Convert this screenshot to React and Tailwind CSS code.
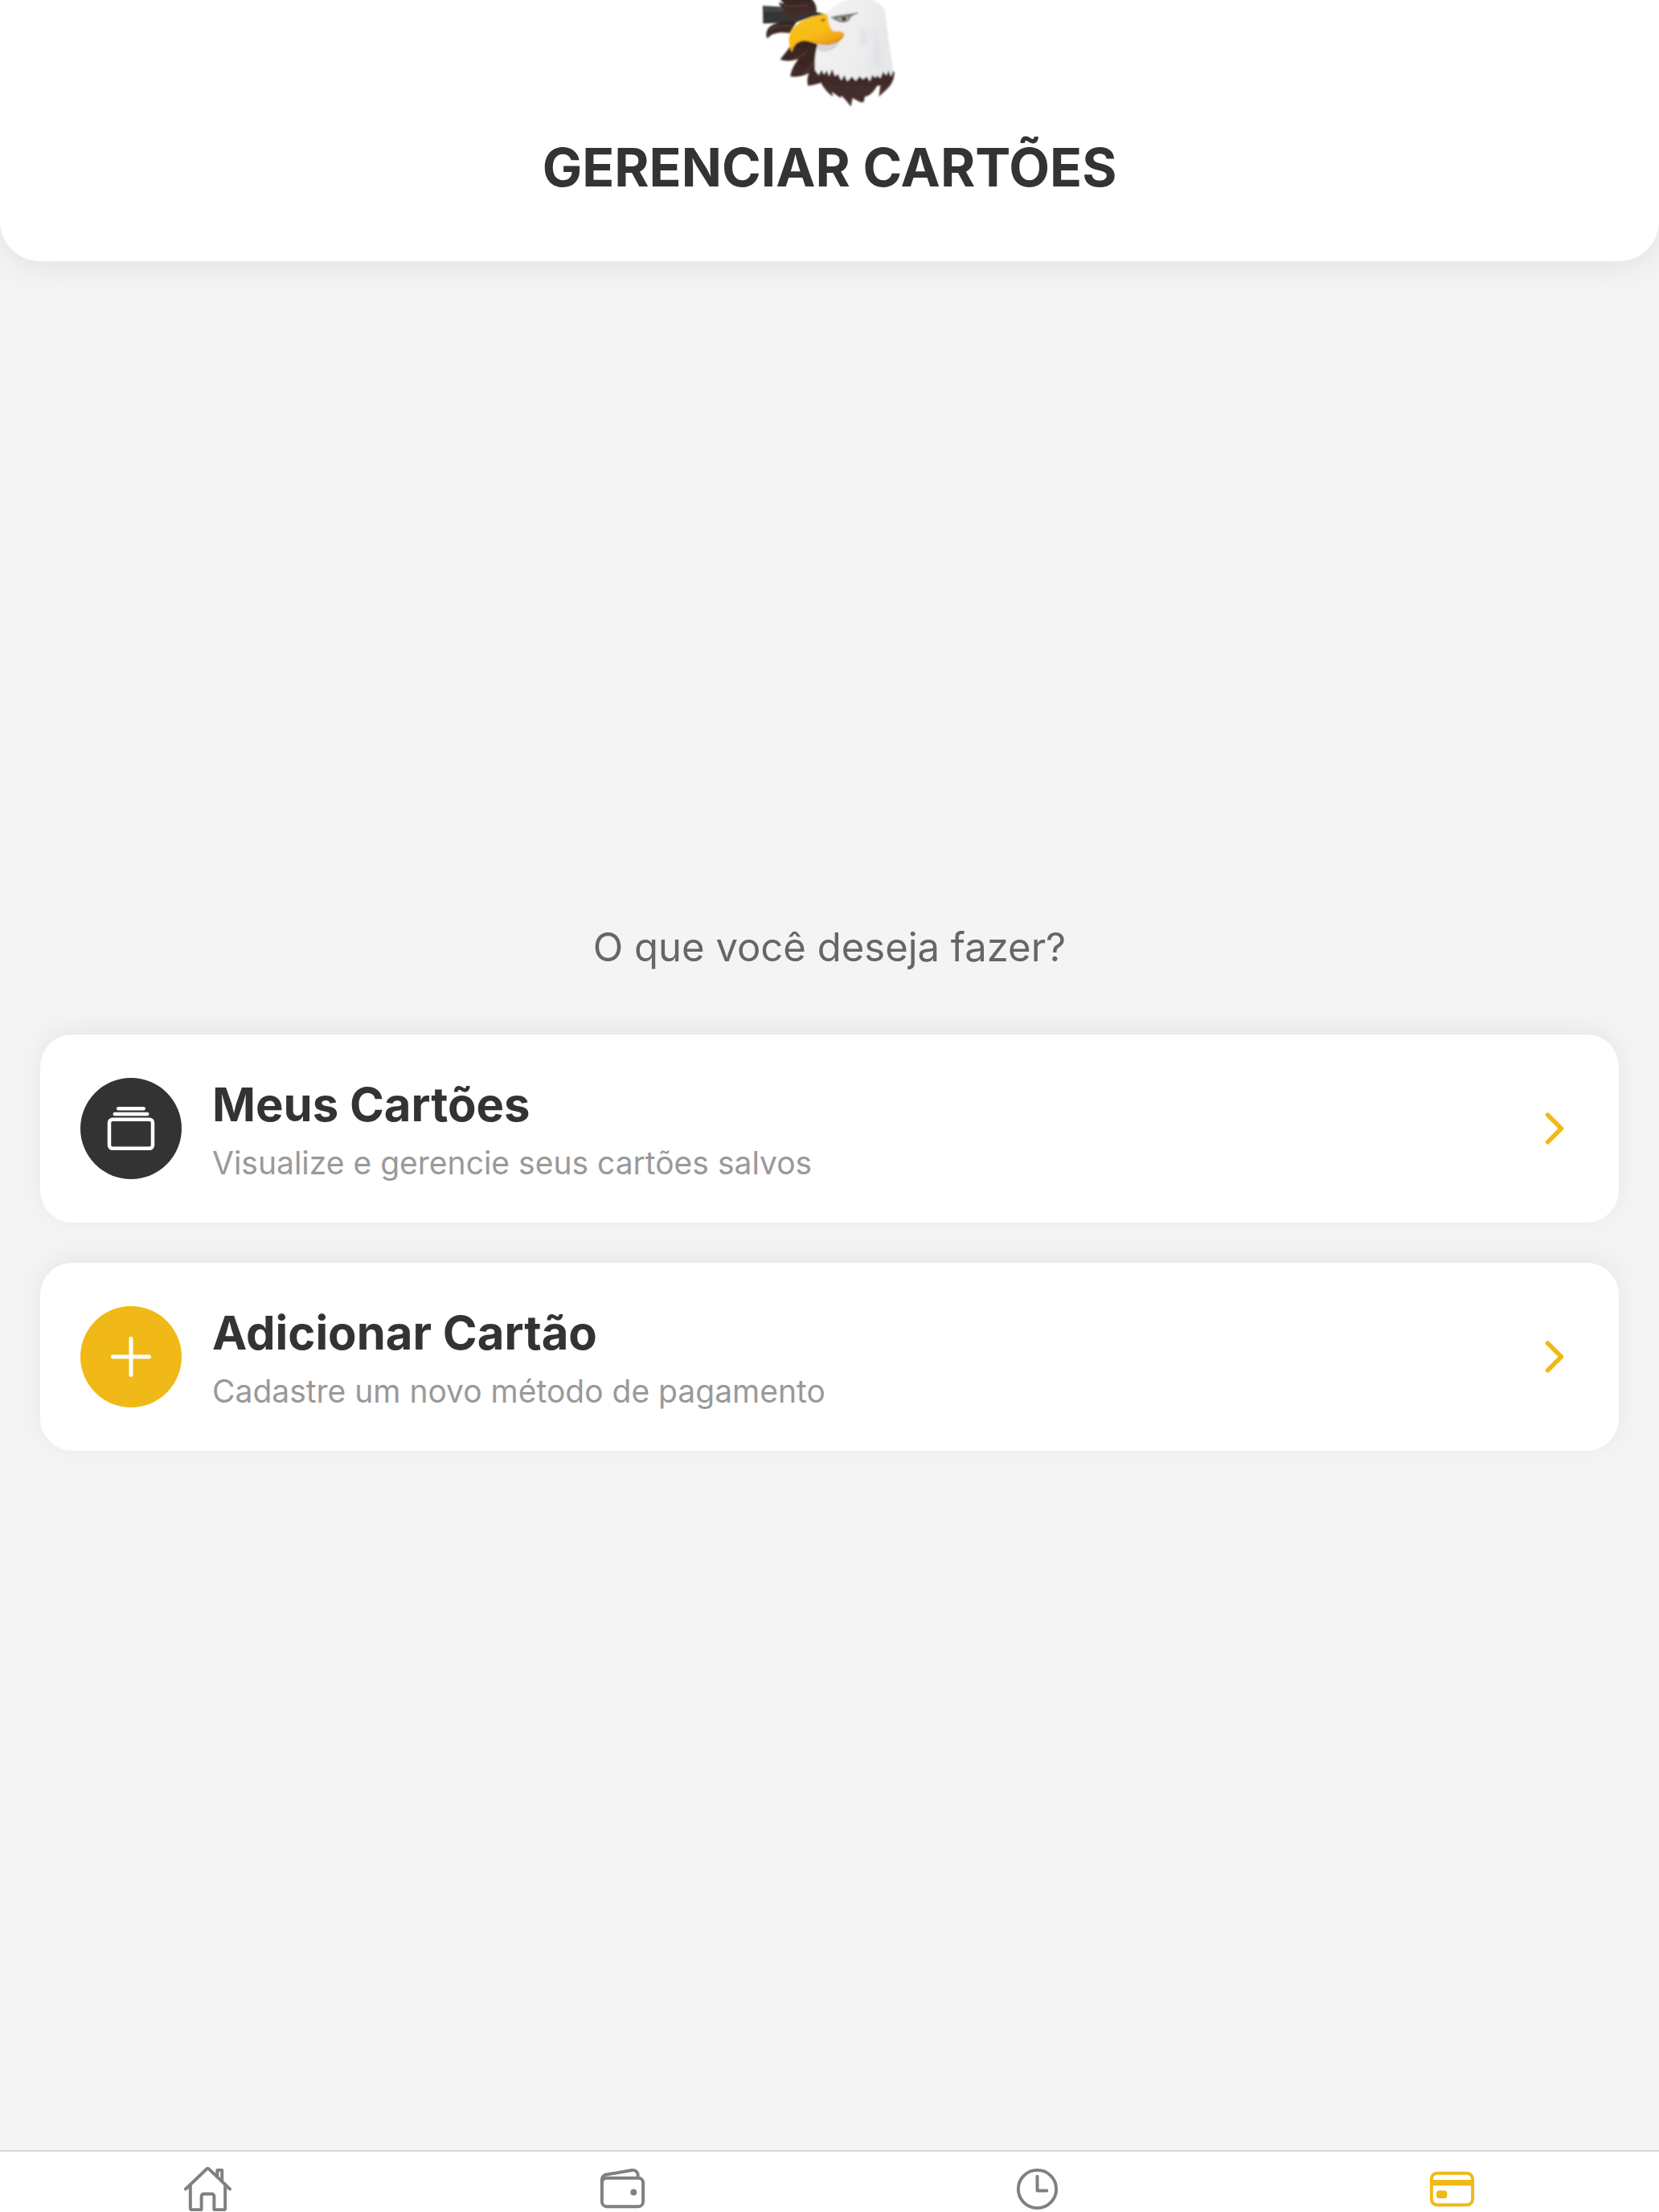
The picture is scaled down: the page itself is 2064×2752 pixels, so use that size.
import { useState } from "react";
import {
  IoAddOutline,
  IoAlbumsOutline,
  IoCardOutline,
  IoChevronForward,
  IoHomeOutline,
  IoTimeOutline,
  IoWalletOutline,
} from "react-icons/io5";
import clsx from "clsx";

const options = [
  {
    title: "Meus Cartões",
    description: "Visualize e gerencie seus cartões salvos",
    Icon: IoAlbumsOutline,
    iconClassName: "size-18",
    circleClassName: "bg-[#333333]",
  },
  {
    title: "Adicionar Cartão",
    description: "Cadastre um novo método de pagamento",
    Icon: IoAddOutline,
    iconClassName: "size-20",
    circleClassName: "bg-[#f0b917]",
  },
];

const tabs = [
  { id: "home", label: "Início", Icon: IoHomeOutline },
  { id: "wallet", label: "Carteira", Icon: IoWalletOutline },
  { id: "history", label: "Histórico", Icon: IoTimeOutline },
  { id: "cards", label: "Cartões", Icon: IoCardOutline },
];

function EagleLogo() {
  return (
    <svg
      viewBox="6 0 600 450"
      className="h-[150px] w-[200px]"
      aria-hidden="true"
    >
      <defs>
        <linearGradient id="beak" x1="0" y1="0" x2="0.6" y2="1">
          <stop offset="0" stopColor="#f7c520" />
          <stop offset="0.6" stopColor="#f8bb16" />
          <stop offset="1" stopColor="#e5951b" />
        </linearGradient>
        <linearGradient id="head" x1="0" y1="0" x2="1" y2="0.3">
          <stop offset="0" stopColor="#f3f3f4" />
          <stop offset="0.6" stopColor="#eeeeef" />
          <stop offset="1" stopColor="#e6e7e9" />
        </linearGradient>
        <linearGradient id="feathers" x1="0" y1="0" x2="0" y2="1">
          <stop offset="0" stopColor="#38231f" />
          <stop offset="1" stopColor="#47312e" />
        </linearGradient>
        <filter id="soft" x="-10%" y="-10%" width="120%" height="120%">
          <feGaussianBlur stdDeviation="2.4" />
        </filter>
        <filter id="shade" x="-50%" y="-50%" width="200%" height="200%">
          <feGaussianBlur stdDeviation="9" />
        </filter>
      </defs>
      <g filter="url(#soft)">
        <path
          d="M57 22 L140 26 L262 46 L292 54 L240 62 L180 84 L58 88 Z"
          fill="#343636"
        />
        <path d="M62 28 L140 30 L130 42 L62 44 Z" fill="#474a49" />
        <path
          d="M120 -6 L238 -6 C252 10 262 28 256 48 C224 50 196 60 178 68 C160 66 140 58 128 44 L146 40 C130 30 118 22 118 8 L136 14 Z"
          fill="url(#feathers)"
        />
        <path
          d="M184 80 C140 76 84 86 74 112 C68 124 68 134 74 144 C90 124 120 118 158 124 Z"
          fill="url(#feathers)"
        />
        <path
          d="M158 174 C148 190 134 206 122 222 C142 230 170 228 190 220 C176 240 162 262 160 286 C186 288 214 282 230 272 C222 290 222 306 226 320 C244 318 262 314 274 308 C284 328 300 348 320 360 L314 342 L348 366 L350 356 C364 370 376 384 386 398 L392 366 L410 376 C418 382 430 384 434 380 L438 360 C454 360 472 344 482 322 L496 318 L490 362 C508 340 548 322 548 270 L540 262 L524 240 L260 240 L268 168 L216 148 L180 158 Z"
          fill="url(#feathers)"
        />
        <path
          d="M166 222 C190 212 210 208 222 190 M210 276 C226 266 240 250 246 228 M124 12 C150 34 200 16 228 20 M82 112 C100 98 140 92 170 98"
          stroke="#5a413b"
          strokeWidth="4"
          fill="none"
        />
        <path
          d="M292 54 C318 18 370 -10 436 -6 C476 0 506 14 514 48 L524 130 C530 176 536 220 544 262 L536 286 L526 264 L518 282 L506 268 L496 292 L484 282 L476 290 L466 280 L456 304 L446 286 L430 296 L418 284 L404 302 L390 286 L372 304 L362 280 L350 300 L338 276 L326 284 L316 258 L304 284 L296 262 L286 278 L276 260 L266 280 L252 262 C250 230 252 196 262 166 Z"
          fill="url(#head)"
        />
        <path
          d="M262 170 C296 172 324 164 346 148 C340 180 302 202 264 190 Z"
          fill="#d6d6d8"
        />
        <g filter="url(#shade)" fill="#d3d5d9" opacity="0.5">
          <path d="M426 96 C444 112 452 138 444 168 L418 164 Z" />
          <path d="M472 108 C492 150 500 200 488 256 L466 230 C478 190 474 150 466 122 Z" />
        </g>
        <path
          d="M296 52 C304 74 302 104 320 116 C334 118 350 112 362 126 C358 152 320 166 288 168 C258 168 232 150 204 152 C180 158 170 174 166 196 C150 166 152 132 166 112 C186 82 226 60 296 52 Z"
          fill="url(#beak)"
        />
        <path
          d="M204 152 C236 148 258 164 288 162 C320 160 346 148 360 126 C362 150 326 168 288 168 C258 168 232 150 204 152 Z"
          fill="#df8e1c"
        />
        <path d="M270 74 L290 68 L286 82 Z" fill="#9b641e" />
        <path
          d="M314 68 C334 60 350 60 366 58 L412 48 L386 62 C384 76 372 84 356 84 C344 84 330 76 314 68 Z"
          fill="#777973"
        />
        <path
          d="M330 68 C344 82 370 84 384 68 L370 62 Z"
          fill="#a9a58a"
        />
        <circle cx="360" cy="70" r="8" fill="#363a34" />
        <path
          d="M310 66 C340 54 374 58 412 48"
          stroke="#70777a"
          strokeWidth="4"
          fill="none"
        />
      </g>
    </svg>
  );
}

function OptionCard({ option }) {
  const { title, description, Icon, iconClassName, circleClassName } = option;
  return (
    <button
      type="button"
      className="flex w-full items-center gap-[38px] rounded-[40px] bg-white p-[50px] text-left shadow-[0_-6px_30px_rgba(0,0,0,0.06)]"
    >
      <span
        className={clsx(
          "flex size-[126px] shrink-0 items-center justify-center rounded-full text-white",
          circleClassName
        )}
      >
        <Icon className={iconClassName} />
      </span>
      <span className="flex flex-1 flex-col gap-3">
        <span className="text-[58px] leading-[74px] font-bold text-[#333333]">
          {title}
        </span>
        <span className="text-[39px] leading-[48px] text-[#999999]">
          {description}
        </span>
      </span>
      <IoChevronForward className="size-[60px] shrink-0 text-[#f0b917]" />
    </button>
  );
}

export default function App() {
  const [activeTab, setActiveTab] = useState("cards");

  return (
    <div className="flex h-screen flex-col overflow-hidden bg-[#f4f4f4] font-['Inter',sans-serif]">
      <header className="flex flex-col items-center gap-[18px] rounded-b-[50px] bg-white pb-[77px] shadow-[0_6px_40px_rgba(0,0,0,0.08)]">
        <EagleLogo />
        <h1 className="text-center text-[66px] leading-[80px] font-bold text-[#333333]">
          GERENCIAR CARTÕES
        </h1>
      </header>

      <main className="flex flex-1 flex-col justify-center px-[50px] pb-12">
        <h2 className="mb-[76px] text-center text-[49px] leading-[64px] text-[#666666]">
          O que você deseja fazer?
        </h2>
        <div className="flex flex-col gap-[50px]">
          {options.map((option) => (
            <OptionCard key={option.title} option={option} />
          ))}
        </div>
      </main>

      <nav className="grid h-[77px] shrink-0 grid-cols-4 border-t-2 border-[#d9d9d9] bg-white">
        {tabs.map(({ id, label, Icon }) => (
          <button
            key={id}
            type="button"
            aria-label={label}
            onClick={() => setActiveTab(id)}
            className={clsx(
              "flex items-start justify-center pt-[15px]",
              activeTab === id ? "text-[#f0b917]" : "text-[#808080]"
            )}
          >
            <Icon className="size-[63px] shrink-0" />
          </button>
        ))}
      </nav>
    </div>
  );
}
